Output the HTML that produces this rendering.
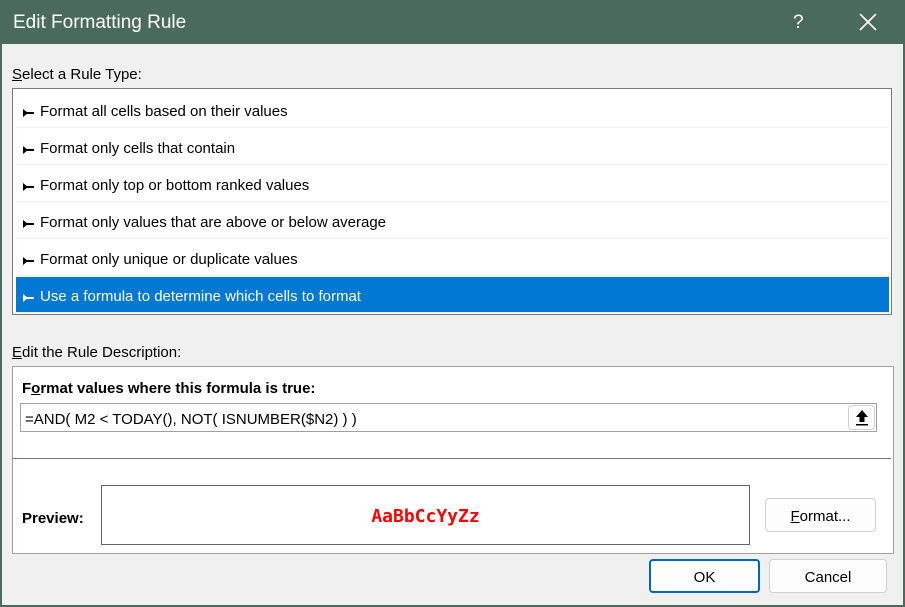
<!DOCTYPE html><html><head><style>
body{margin:0;width:905px;height:607px;overflow:hidden;background:#4a6a5e;font-family:"Liberation Sans",sans-serif;font-size:15px;color:#000}
.win{position:absolute;left:0;top:0;width:905px;height:607px;background:#4a6a5e;border-radius:8px 8px 0 0}
.body{position:absolute;left:2px;top:44px;width:901px;height:561px;background:#f0f0f0}
.a{position:absolute}
.row{position:absolute;left:3px;width:873px;height:36px;line-height:40px;border-bottom:1px solid #f0f0f0;padding-left:24px;box-sizing:border-box}
.row:before{content:"";position:absolute;left:7px;top:20px;width:11px;height:2px;background:#000}
.row:after{content:"";position:absolute;left:7px;top:17px;width:0;height:0;border-left:5px solid #000;border-top:4px solid transparent;border-bottom:4px solid transparent}
.sel{background:#0078d4;color:#fff}
.sel:before{background:#fff}
.sel:after{border-left-color:#fff}
.btn{position:absolute;background:#fdfdfd;border:1px solid #d0d0d0;border-radius:4px;text-align:center;box-sizing:border-box}
</style></head><body><div class="win">
<div class="a" style="left:13px;top:12px;color:#fff;font-size:19px">Edit Formatting Rule</div>
<div class="a" style="left:793px;top:12px;color:#fff;font-size:19px">?</div>
<svg class="a" style="left:859px;top:13px" width="18" height="18"><path d="M1 1L17 17M17 1L1 17" stroke="#fff" stroke-width="1.6"/></svg>
<div class="body"></div>
<div class="a" style="left:12px;top:66px"><u>S</u>elect a Rule Type:</div>
<div class="a" style="left:12px;top:88px;width:880px;height:227px;background:#fff;border:1px solid #7a7a7a;box-sizing:border-box">
<div class="row" style="top:3px">Format all cells based on their values</div>
<div class="row" style="top:40px">Format only cells that contain</div>
<div class="row" style="top:77px">Format only top or bottom ranked values</div>
<div class="row" style="top:114px">Format only values that are above or below average</div>
<div class="row" style="top:151px">Format only unique or duplicate values</div>
<div class="row sel" style="top:188px;height:36px">Use a formula to determine which cells to format</div>
</div>
<div class="a" style="left:12px;top:344px"><u>E</u>dit the Rule Description:</div>
<div class="a" style="left:12px;top:366px;width:882px;height:188px;background:#fff;border:1px solid #a0a0a0;box-sizing:border-box"></div>
<div class="a" style="left:22px;top:380px;font-weight:bold">F<u>o</u>rmat values where this formula is true:</div>
<div class="a" style="left:20px;top:403px;width:857px;height:29px;border:1px solid #a0a0a0;box-sizing:border-box;line-height:31px;padding-left:4px">=AND( M2 &lt; TODAY(), NOT( ISNUMBER($N2) ) )</div>
<div class="btn" style="left:848px;top:405px;width:27px;height:25px"><svg width="14" height="18" style="margin-top:3px"><path d="M7 1L1 8H4.5V13H9.5V8H13Z" fill="#000"/><rect x="1" y="15" width="12" height="1.5"/></svg></div>
<div class="a" style="left:12px;top:458px;width:879px;height:1px;background:#777"></div>
<div class="a" style="left:22px;top:510px;font-weight:bold">Preview:</div>
<div class="a" style="left:101px;top:485px;width:649px;height:60px;border:1px solid #666;box-sizing:border-box;background:#fff;text-align:center;line-height:62px;color:#f00;font-weight:bold;font-size:18px;font-family:'DejaVu Sans Mono','Liberation Mono',monospace">AaBbCcYyZz</div>
<div class="btn" style="left:765px;top:498px;width:111px;height:34px;line-height:36px"><u>F</u>ormat...</div>
<div class="btn" style="left:649px;top:559px;width:111px;height:34px;line-height:34px;border:2px solid #0067c0">OK</div>
<div class="btn" style="left:769px;top:559px;width:118px;height:34px;line-height:36px">Cancel</div>
</div></body></html>
